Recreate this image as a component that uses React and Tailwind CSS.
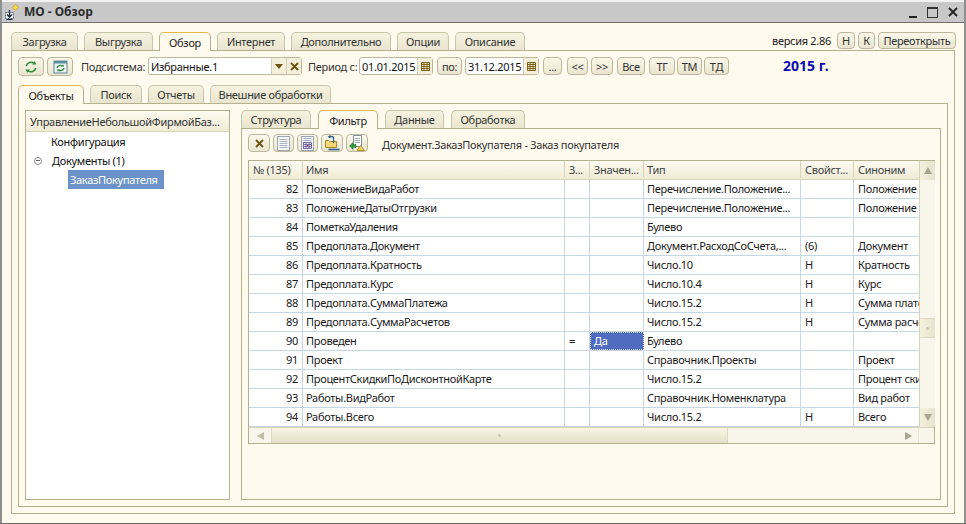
const rows = [
  [82, "ПоложениеВидаРабот", "", "", "Перечисление.Положение...", "", "Положение"],
  [83, "ПоложениеДатыОтгрузки", "", "", "Перечисление.Положение...", "", "Положение"],
  [84, "ПометкаУдаления", "", "", "Булево", "", ""],
  [85, "Предоплата.Документ", "", "", "Документ.РасходСоСчета,...", "(6)", "Документ"],
  [86, "Предоплата.Кратность", "", "", "Число.10", "Н", "Кратность"],
  [87, "Предоплата.Курс", "", "", "Число.10.4", "Н", "Курс"],
  [88, "Предоплата.СуммаПлатежа", "", "", "Число.15.2", "Н", "Сумма платежа"],
  [89, "Предоплата.СуммаРасчетов", "", "", "Число.15.2", "Н", "Сумма расчетов"],
  [90, "Проведен", "=", "Да", "Булево", "", ""],
  [91, "Проект", "", "", "Справочник.Проекты", "", "Проект"],
  [92, "ПроцентСкидкиПоДисконтнойКарте", "", "", "Число.15.2", "", "Процент скидки"],
  [93, "Работы.ВидРабот", "", "", "Справочник.Номенклатура", "", "Вид работ"],
  [94, "Работы.Всего", "", "", "Число.15.2", "Н", "Всего"],
];

function Tab({ label, width, active }) {
  return (
    <div
      className={
        active
          ? "relative z-10 -mb-px flex h-[19px] items-center justify-center rounded-t-[5px] border border-b-0 border-[#b5b08f] border-t-[#e5b94a] bg-[#fffaee] text-[#222]"
          : "flex h-[18px] items-center justify-center rounded-t-[5px] border border-b-0 border-[#c9c5aa] bg-gradient-to-b from-[#f6f2e0] to-[#e9e5cf] text-[#333]"
      }
      style={{ width }}
    >
      {label}
    </div>
  );
}

function Btn({ children, width, className = "" }) {
  return (
    <div
      className={
        "flex shrink-0 items-center justify-center rounded-[4px] border border-[#bdb89d] bg-gradient-to-b from-[#fbf8ea] to-[#e9e5cf] text-[#333] " +
        className
      }
      style={{ width }}
    >
      {children}
    </div>
  );
}

function CalendarIcon() {
  return (
    <svg width="11" height="11" viewBox="0 0 11 11" fill="none" stroke="#7d6418" strokeWidth="1">
      <path d="M1.5 1.5h8v8h-8z M1.5 3.5h8 M1.5 5.5h8 M1.5 7.5h8 M4 1.5v8 M7 1.5v8" />
    </svg>
  );
}

function DateField({ value }) {
  return (
    <div className="flex h-[18px] w-[74px] shrink-0 items-center rounded-[3px] border border-[#bdb89d] bg-white">
      <span className="flex-1 pl-[2px] text-[#111]">{value}</span>
      <span className="flex h-full w-[15px] items-center justify-center border-l border-[#d5d1b8] bg-[#f3efdb]">
        <CalendarIcon />
      </span>
    </div>
  );
}

function RefreshIcon() {
  return (
    <svg width="14" height="14" viewBox="0 0 14 14" fill="none" stroke="#2f8f3a" strokeWidth="1.6">
      <path d="M2.2 6a5 5 0 0 1 8-2.6" />
      <path d="M11.8 8a5 5 0 0 1-8 2.6" />
      <path d="M8 4.6h4.4L10.8 1.2z" fill="#2f8f3a" stroke="none" />
      <path d="M6 9.4H1.6l1.6 3.4z" fill="#2f8f3a" stroke="none" />
    </svg>
  );
}

function RefreshWindowIcon() {
  return (
    <svg width="15" height="14" viewBox="0 0 15 14" fill="none">
      <rect x="1" y="1" width="13" height="12" fill="#eef4f5" stroke="#5b8794" />
      <rect x="1" y="1" width="13" height="2.5" fill="#5a8fa0" />
      <path d="M4 8a3.5 3.5 0 0 1 5.5-2M11 8a3.5 3.5 0 0 1-5.5 2" stroke="#2f8a3a" strokeWidth="1.3" />
      <path d="M8 6.6h3.2L10 4.2zM7 9.4H3.8L5 11.8z" fill="#2f8a3a" />
    </svg>
  );
}

function CloseMark() {
  return (
    <svg width="9" height="9" viewBox="0 0 9 9" fill="none" stroke="#6b5310" strokeWidth="1.8">
      <path d="M1 1l7 7M8 1l-7 7" />
    </svg>
  );
}

function DocIcon() {
  return (
    <svg width="13" height="15" viewBox="0 0 13 15" fill="none" stroke="#a8b4c0">
      <rect x="0.5" y="0.5" width="12" height="14" fill="#f4f6f8" stroke="#9aa7b5" />
      <path d="M2.5 3.5h8M2.5 5.5h8M2.5 7.5h8M2.5 9.5h8M2.5 11.5h8" />
    </svg>
  );
}

function DocGridIcon() {
  return (
    <svg width="13" height="15" viewBox="0 0 13 15" fill="none" stroke="#a8b4c0">
      <rect x="0.5" y="0.5" width="12" height="14" fill="#f4f6f8" stroke="#9aa7b5" />
      <path d="M2.5 2.5h8M2.5 4.5h8" />
      <path d="M2.5 6.5h8v6h-8zM2.5 8.5h8M2.5 10.5h8M5 6.5v6M8 6.5v6" stroke="#7a6fae" />
      <path d="M5.5 9h2v1h-2z" fill="#c24b4b" stroke="none" />
    </svg>
  );
}

function OpenFileIcon() {
  return (
    <svg width="17" height="16" viewBox="0 0 17 16" fill="none">
      <path d="M1.5 5.5h3l1 1h7v6h-11z" fill="#f4d877" stroke="#a88a2c" />
      <path d="M9.5 8V3a1.5 1.5 0 0 0-1.5-1.5H5.5" stroke="#2e5f8a" strokeWidth="1.3" />
      <path d="M6.5 0L3.5 1.7l3 1.8z" fill="#2e5f8a" />
      <path d="M4.5 14.5h11" stroke="#2e5f8a" strokeWidth="1.6" />
    </svg>
  );
}

function SaveFileIcon() {
  return (
    <svg width="17" height="17" viewBox="0 0 17 17" fill="none">
      <path d="M4.5 0.5h8v11h-8z" fill="#fff" stroke="#7f8c9a" />
      <path d="M6 3.5h5M6 5.5h5M6 7.5h5" stroke="#9aa7b5" />
      <path d="M0.5 11l3.5-3.5v2h3v3h-3v2z" fill="#2f9a3f" stroke="#24702d" strokeWidth="0.5" />
      <path d="M8 15.5l3.5-5 4 5z" fill="#efd064" stroke="#b5942f" />
    </svg>
  );
}

function TitleIcon() {
  return (
    <svg width="17" height="17" viewBox="0 0 17 17" fill="none">
      <path d="M1.5 8.5h8v6h-8z" fill="#eef1f4" stroke="#5a6470" strokeDasharray="2 1" />
      <path d="M5.5 6v7M3 10.5l2.5 2.5L8 10.5" stroke="#1c2530" strokeWidth="1.3" />
      <path d="M2.5 15.5h6" stroke="#1c2530" />
      <path d="M11.5 0.5l3 3-3 3-3-3z" fill="#f6d84c" stroke="#d2ac2e" />
    </svg>
  );
}

export default function App() {
  return (
    <div className="h-[524px] w-[966px] overflow-hidden bg-[#6b6b6b] pb-px font-['Liberation_Sans',sans-serif] text-[11px] leading-none tracking-[-0.3px] whitespace-nowrap">
      <div className="flex h-[523px] flex-col border-x-2 border-x-[#8f8f8f] bg-[#fffaee]">
        {/* title */}
        <div className="h-[2px] shrink-0 bg-[#f2f2f2]" />
        <div className="flex h-[21px] shrink-0 items-center border-b border-[#6e6e6e] bg-[#c8c8c8] pl-[2px] pr-[6px]">
          <TitleIcon />
          <span className="ml-[3px] text-[12px] font-bold tracking-normal text-[#2b2b2b]">МО - Обзор</span>
          <div className="ml-auto flex items-center gap-[10px]">
            <span className="mt-[9px] h-[2px] w-[8px] bg-[#222]" />
            <span className="h-[11px] w-[11px] border border-t-2 border-[#333]" />
            <svg width="10" height="10" viewBox="0 0 10 10" stroke="#222" strokeWidth="1.8">
              <path d="M1 1l8 8M9 1l-8 8" />
            </svg>
          </div>
        </div>

        {/* outer tabs */}
        <div className="flex h-[27px] shrink-0 items-end pl-[9px] pr-[8px]">
          <div className="flex gap-[6px]">
            <Tab label="Загрузка" width={67} />
            <Tab label="Выгрузка" width={69} />
            <Tab label="Обзор" width={52} active />
            <Tab label="Интернет" width={68} />
            <Tab label="Дополнительно" width={100} />
            <Tab label="Опции" width={52} />
            <Tab label="Описание" width={70} />
          </div>
          <div className="mb-[1px] ml-auto flex h-[18px] items-center text-[#222]">
            <span className="mr-[6px]">версия 2.86</span>
            <Btn width={18} className="mr-[3px] h-[17px]">Н</Btn>
            <Btn width={17} className="mr-[3px] h-[17px]">К</Btn>
            <Btn width={78} className="h-[17px]">Переоткрыть</Btn>
          </div>
        </div>

        <div className="mx-[9px] mb-[9px] flex min-h-0 flex-1 flex-col border border-[#b5b08f]">
          {/* period toolbar */}
          <div className="flex h-[34px] shrink-0 items-start pl-[6px] pt-[6px] text-[#333]">
            <Btn width={26} className="h-[19px]"><RefreshIcon /></Btn>
            <Btn width={26} className="ml-[3px] h-[19px]"><RefreshWindowIcon /></Btn>
            <span className="ml-[8px] mt-[4px] w-[67px] shrink-0">Подсистема:</span>
            <div className="flex h-[18px] w-[154px] shrink-0 items-center rounded-[3px] border border-[#bdb89d] bg-white">
              <span className="flex-1 pl-[2px] text-[#111]">Избранные.1</span>
              <span className="flex h-full w-[15px] items-center justify-center border-l border-[#d5d1b8] bg-[#f3efdb]">
                <span className="h-0 w-0 border-x-[4px] border-t-[5px] border-x-transparent border-t-[#6b5310]" />
              </span>
              <span className="flex h-full w-[15px] items-center justify-center border-l border-[#d5d1b8] bg-[#f3efdb]">
                <CloseMark />
              </span>
            </div>
            <span className="ml-[6px] mt-[4px] w-[51px] shrink-0">Период с:</span>
            <DateField value="01.01.2015" />
            <Btn width={25} className="ml-[4px] h-[18px]">по:</Btn>
            <div className="ml-[3px]"><DateField value="31.12.2015" /></div>
            <Btn width={19} className="ml-[4px] h-[18px]">...</Btn>
            <Btn width={21} className="ml-[5px] h-[18px]">&lt;&lt;</Btn>
            <Btn width={22} className="ml-[3px] h-[18px]">&gt;&gt;</Btn>
            <Btn width={28} className="ml-[4px] h-[18px]">Все</Btn>
            <Btn width={26} className="ml-[4px] h-[18px]">ТГ</Btn>
            <Btn width={25} className="ml-[2px] h-[18px]">ТМ</Btn>
            <Btn width={25} className="ml-[2px] h-[18px]">ТД</Btn>
            <span className="ml-[54px] mt-[2px] text-[14px] font-bold tracking-normal text-[#0b0bb0]">2015 г.</span>
          </div>

          {/* object tabs */}
          <div className="flex shrink-0 gap-[6px] pl-[6px]">
            <Tab label="Объекты" width={66} active />
            <Tab label="Поиск" width={52} />
            <Tab label="Отчеты" width={56} />
            <Tab label="Внешние обработки" width={121} />
          </div>

          <div className="mx-[6px] mb-[6px] flex min-h-0 flex-1 gap-[11px] border border-[#b5b08f] p-[6px]">
            {/* tree */}
            <div className="flex w-[205px] shrink-0 flex-col border border-[#b5b08f] bg-white">
              <div className="flex h-[21px] shrink-0 items-center border-b border-[#d8d4bc] bg-gradient-to-b from-[#fdfbf0] to-[#efebd6] pl-[4px] text-[#333]">
                УправлениеНебольшойФирмойБаз...
              </div>
              <div className="flex h-[19px] items-center pl-[25px] text-[#111]">Конфигурация</div>
              <div className="flex h-[19px] items-center pl-[8px] text-[#111]">
                <span className="mr-[10px] flex h-[8px] w-[8px] items-center justify-center rounded-full border border-[#888]">
                  <span className="h-px w-[4px] bg-[#666]" />
                </span>
                Документы (1)
              </div>
              <div className="ml-[42px] flex h-[19px] w-[96px] items-center self-start bg-[#6c93c9] pl-[2px] text-white">
                ЗаказПокупателя
              </div>
            </div>

            {/* filter pane */}
            <div className="flex min-w-0 flex-1 flex-col">
              <div className="flex shrink-0 gap-[7px]">
                <Tab label="Структура" width={70} />
                <Tab label="Фильтр" width={60} active />
                <Tab label="Данные" width={59} />
                <Tab label="Обработка" width={74} />
              </div>
              <div className="flex min-h-0 flex-1 flex-col border border-[#b5b08f] px-[6px]">
                <div className="flex h-[31px] shrink-0 items-center gap-[3px] pb-[3px]">
                  <Btn width={22} className="h-[18px]"><CloseMark /></Btn>
                  <Btn width={21} className="h-[18px]"><DocIcon /></Btn>
                  <Btn width={21} className="h-[18px]"><DocGridIcon /></Btn>
                  <Btn width={22} className="h-[18px]"><OpenFileIcon /></Btn>
                  <Btn width={22} className="h-[18px]"><SaveFileIcon /></Btn>
                  <span className="ml-[11px] mt-[2px] text-[#333]">Документ.ЗаказПокупателя - Заказ покупателя</span>
                </div>
                <div className="w-[687px] shrink-0 border border-[#b5b08f] bg-white">
                  <div className="flex">
                    <div className="w-[670px] shrink-0">
                      <div className="flex h-[19px] border-b border-[#d8d4bc] bg-gradient-to-b from-[#fdfbf0] to-[#efebd6] pb-px text-[#444]">
                        <div className="flex w-[54px] items-center border-r border-[#d8d4bc] pl-[4px]">№ (135)</div>
                        <div className="flex w-[262px] items-center border-r border-[#d8d4bc] pl-[3px]">Имя</div>
                        <div className="flex w-[25px] items-center border-r border-[#d8d4bc] pl-[4px]">З...</div>
                        <div className="flex w-[54px] items-center border-r border-[#d8d4bc] pl-[4px]">Значен...</div>
                        <div className="flex w-[157px] items-center border-r border-[#d8d4bc] pl-[3px]">Тип</div>
                        <div className="flex w-[53px] items-center border-r border-[#d8d4bc] pl-[4px]">Свойст...</div>
                        <div className="flex flex-1 items-center pl-[4px]">Синоним</div>
                      </div>
                      {rows.map((r) => (
                        <div key={r[0]} className="flex h-[19px] border-b border-[#c8d5e2] text-[#1a1a1a]">
                          <div className="flex w-[54px] items-center justify-end border-r border-[#c8d5e2] pb-px pr-[4px]">{r[0]}</div>
                          <div className="flex w-[262px] items-center border-r border-[#c8d5e2] pb-px pl-[3px]">{r[1]}</div>
                          <div className="flex w-[25px] items-center border-r border-[#c8d5e2] pb-px pl-[4px]">{r[2]}</div>
                          {r[3] ? (
                            <div className="flex w-[54px] items-center border border-dotted border-[#dfe4f5] bg-[#4f6cc0] pb-px pl-[3px] text-white">{r[3]}</div>
                          ) : (
                            <div className="w-[54px] border-r border-[#c8d5e2]" />
                          )}
                          <div className="flex w-[157px] items-center border-r border-[#c8d5e2] pb-px pl-[3px]">{r[4]}</div>
                          <div className="flex w-[53px] items-center border-r border-[#c8d5e2] pb-px pl-[4px]">{r[5]}</div>
                          <div className="flex min-w-0 flex-1 items-center overflow-hidden pb-px pl-[4px]">{r[6]}</div>
                        </div>
                      ))}
                    </div>
                    {/* vertical scrollbar */}
                    <div className="flex w-[16px] shrink-0 flex-col border-l border-[#d8d4bc] bg-[#f8f6ea]">
                      <div className="flex h-[19px] items-center justify-center bg-gradient-to-r from-[#f3f0dd] to-[#e6e2cb]">
                        <span className="h-0 w-0 border-x-[4px] border-b-[7px] border-x-transparent border-b-[#a8a590]" />
                      </div>
                      <div className="h-[138px]" />
                      <div className="flex h-[20px] items-center justify-center border-y border-[#ddd9c2] bg-gradient-to-r from-[#f5f2df] to-[#e6e2cb]">
                        <span className="h-[3px] w-[3px] rounded-full bg-[#cbc8b2]" />
                      </div>
                      <div className="flex-1" />
                      <div className="flex h-[19px] items-center justify-center bg-gradient-to-r from-[#f3f0dd] to-[#e6e2cb]">
                        <span className="h-0 w-0 border-x-[4px] border-t-[7px] border-x-transparent border-t-[#a8a590]" />
                      </div>
                    </div>
                  </div>
                  {/* horizontal scrollbar */}
                  <div className="flex h-[16px] border-t border-[#d8d4bc] bg-[#f8f6ea]">
                    <div className="flex w-[22px] items-center justify-center">
                      <span className="h-0 w-0 border-y-[4px] border-r-[7px] border-y-transparent border-r-[#c0bda8]" />
                    </div>
                    <div className="flex w-[457px] items-center justify-center border-x border-[#ddd9c2] bg-gradient-to-b from-[#f8f5e4] to-[#e4e0c8]">
                      <span className="h-[3px] w-[3px] rounded-full bg-[#cbc8b2]" />
                    </div>
                    <div className="flex-1" />
                    <div className="flex w-[20px] items-center justify-center">
                      <span className="h-0 w-0 border-y-[4px] border-l-[7px] border-y-transparent border-l-[#a8a590]" />
                    </div>
                    <div className="w-[16px] border-l border-[#e8e5d2]" />
                  </div>
                </div>
                <div className="flex-1" />
              </div>
            </div>
          </div>
        </div>
      </div>
    </div>
  );
}
